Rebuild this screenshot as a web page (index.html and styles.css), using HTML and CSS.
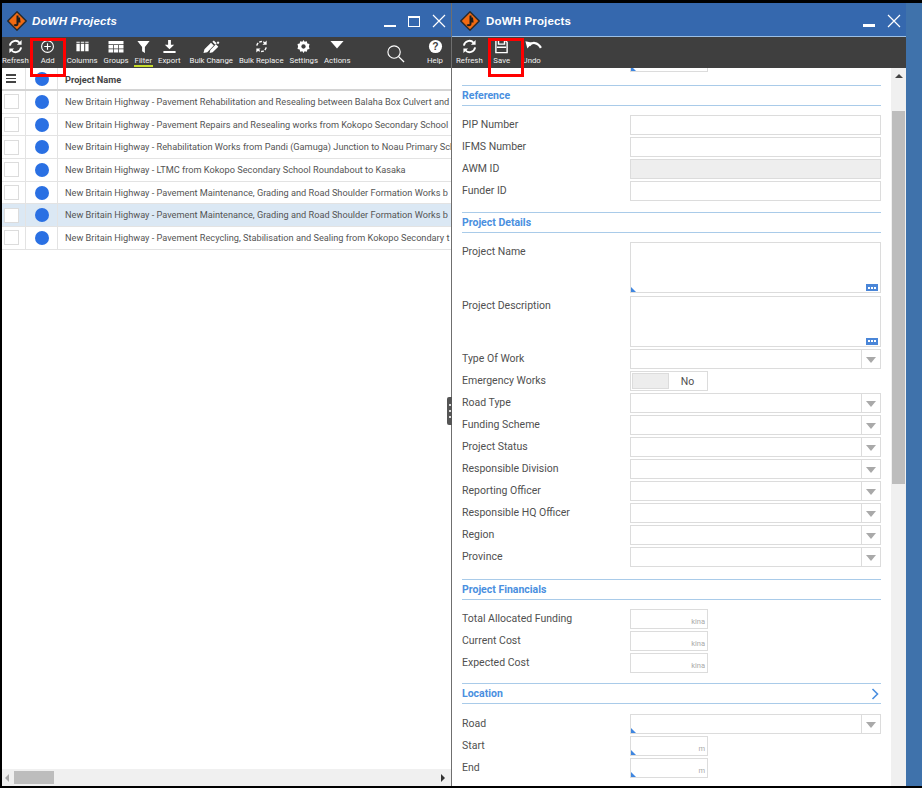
FILE: index.html
```html
<!DOCTYPE html>
<html lang="en">
<head>
<meta charset="utf-8">
<title>DoWH Projects</title>
<link rel="stylesheet" href="styles.css">
</head>
<body>
<svg class="defs" width="0" height="0" aria-hidden="true">
  <symbol id="logo" viewBox="0 0 20 20">
    <path d="M10 .8 19.2 10 10 19.2.8 10z" fill="#f26a12" stroke="#2a2a2a" stroke-width="1.4"/>
    <path d="M10.5 4.5v8.5c0 1.6-2.4 1.8-3 .4M12 6.5l.6 5" fill="none" stroke="#1d1d1d" stroke-width="2"/>
  </symbol>
  <symbol id="refresh" viewBox="0 0 16 16">
    <path d="M2 7a6 6 0 0 1 10.4-3M14 9a6 6 0 0 1-10.4 3" fill="none" stroke="#fff" stroke-width="2"/>
    <path d="M14.5 1v5h-5zM1.500 15v-5h5z" fill="#fff"/>
  </symbol>
  <symbol id="caret" viewBox="0 0 10 6"><path d="M0 0h10L5 6z" fill="#a9a9a9"/></symbol>
  <symbol id="close" viewBox="0 0 14 14"><path d="M1 1l12 12M13 1 1 13" stroke="#fff" stroke-width="1.200" fill="none"/></symbol>
</svg>
<div class="screen">
  <section class="win win-left">
    <header class="title">
      <svg class="logo"><use href="#logo"/></svg>
      <span class="title-text title-italic">DoWH Projects</span>
      <span class="win-btns">
        <i class="min"></i>
        <i class="max"></i>
        <svg class="x"><use href="#close"/></svg>
      </span>
    </header>
    <nav class="toolbar">
      <div class="tool"><svg class="ic"><use href="#refresh"/></svg><span>Refresh</span></div>
      <div class="tool tool-add"><svg class="ic" viewBox="0 0 16 16"><circle cx="8" cy="8" r="6.300" fill="none" stroke="#fff" stroke-width="1.200"/><path d="M8 4.500v7M4.500 8h7" stroke="#fff" stroke-width="1.200"/></svg><span>Add</span></div>
      <div class="tool"><svg class="ic ic-col" viewBox="0 0 16 16"><path d="M1.500 5h3.600v8H1.500zM6.200 5h3.600v8H6.200zM10.900 5h3.600v8h-3.600zM1.500 3h3.600v1H1.500zM6.200 3h3.600v1H6.200zM10.900 3h3.600v1h-3.600z" fill="#fff"/></svg><span>Columns</span></div>
      <div class="tool"><svg class="ic ic-wide" viewBox="0 0 18 16"><path d="M1 2h16v3.500H1zM1 6.500h4.800V10H1zM6.600 6.500h4.800V10H6.600zM12.200 6.500H17V10h-4.800zM1 11h4.800v3.500H1zM6.600 11h4.800v3.500H6.600zM12.200 11H17v3.500h-4.800z" fill="#fff"/></svg><span>Groups</span></div>
      <div class="tool tool-on"><svg class="ic" viewBox="0 0 16 16"><path d="M1.500 2h13L9.500 8.500V15l-3-2V8.500z" fill="#fff"/></svg><span>Filter</span></div>
      <div class="tool"><svg class="ic" viewBox="0 0 16 16"><path d="M6.500 1h3v5H13L8 11 3 6h3.500zM1.500 12.800h13V15h-13z" fill="#fff"/></svg><span>Export</span></div>
      <div class="tool tool-bulk"><svg class="ic ic-wide" viewBox="0 0 20 16"><path d="M2 15l1-4 7-7 3 3-7 7zM8.500 15l.8-3.300 6-6 2.500 2.500-6 6z" fill="#fff"/><path d="M11.500 3l1.500-1.500 3 3L14.500 6zM16 4l1.500-1.500 1.500 1.500L17.500 5.500z" fill="#fff"/></svg><span>Bulk Change</span></div>
      <div class="tool"><svg class="ic" viewBox="0 0 16 16"><path d="M3 7a5.200 5.200 0 0 1 8.500-3M13 9a5.200 5.200 0 0 1-8.500 3" fill="none" stroke="#fff" stroke-width="1.500" stroke-dasharray="3 1.300"/><path d="M13.500 1.500v4.500H9zM2.500 14.500V10H7z" fill="#fff"/></svg><span>Bulk Replace</span></div>
      <div class="tool"><svg class="ic" viewBox="0 0 16 16"><path d="M8 1l1.200 2 2.300-.6.600 2.300 2.300.6L13.800 8l.6 2.700-2.300.6-.6 2.300-2.300-.6L8 15l-1.200-2-2.300.6-.6-2.300-2.300-.6L2.200 8l-.6-2.700 2.300-.6.600-2.300 2.300.6z" fill="#fff"/><circle cx="8" cy="8" r="2.300" fill="#3f3f3f"/></svg><span>Settings</span></div>
      <div class="tool"><svg class="ic ic-wide" viewBox="0 0 18 16"><path d="M2 2h14L9 10z" fill="#fff"/></svg><span>Actions</span></div>
      <div class="tool-search"><svg class="search" viewBox="0 0 20 20"><circle cx="8.500" cy="8.500" r="6.500" fill="none" stroke="#fff" stroke-width="1.200"/><path d="M13.300 13.300 19 19" stroke="#fff" stroke-width="1.400"/></svg></div>
      <div class="tool tool-help"><svg class="ic" viewBox="0 0 16 16"><circle cx="8" cy="8" r="7" fill="#fff"/><text x="8" y="12" class="help-q">?</text></svg><span>Help</span></div>
    </nav>
    <div class="grid">
      <div class="grow grow-head">
        <div class="c-check c-menu"><i></i><i></i><i></i></div>
        <div class="c-dot"><b></b></div>
        <div class="c-name c-name-head">Project Name</div>
      </div>
      <div class="grow"><div class="c-check"><s></s></div><div class="c-dot"><b></b></div><div class="c-name">New Britain Highway - Pavement Rehabilitation and Resealing between Balaha Box Culvert and</div></div>
      <div class="grow"><div class="c-check"><s></s></div><div class="c-dot"><b></b></div><div class="c-name">New Britain Highway - Pavement Repairs and Resealing works from Kokopo Secondary School</div></div>
      <div class="grow"><div class="c-check"><s></s></div><div class="c-dot"><b></b></div><div class="c-name">New Britain Highway - Rehabilitation Works from Pandi (Gamuga) Junction to Noau Primary Sch</div></div>
      <div class="grow"><div class="c-check"><s></s></div><div class="c-dot"><b></b></div><div class="c-name">New Britain Highway - LTMC from Kokopo Secondary School Roundabout to Kasaka</div></div>
      <div class="grow"><div class="c-check"><s></s></div><div class="c-dot"><b></b></div><div class="c-name">New Britain Highway - Pavement Maintenance, Grading and Road Shoulder Formation Works b</div></div>
      <div class="grow grow-sel"><div class="c-check"><s></s></div><div class="c-dot"><b></b></div><div class="c-name">New Britain Highway - Pavement Maintenance, Grading and Road Shoulder Formation Works b</div></div>
      <div class="grow"><div class="c-check"><s></s></div><div class="c-dot"><b></b></div><div class="c-name">New Britain Highway - Pavement Recycling, Stabilisation and Sealing from Kokopo Secondary t</div></div>
    </div>
    <div class="hscroll">
      <i class="arr arr-l"></i>
      <i class="thumb-h"></i>
      <i class="arr arr-r"></i>
    </div>
    <div class="redbox redbox-add"></div>
  </section>

  <section class="win win-right">
    <header class="title title-right">
      <svg class="logo"><use href="#logo"/></svg>
      <span class="title-text">DoWH Projects</span>
      <span class="win-btns">
        <i class="min"></i>
        <svg class="x"><use href="#close"/></svg>
      </span>
    </header>
    <nav class="toolbar">
      <div class="tool"><svg class="ic"><use href="#refresh"/></svg><span>Refresh</span></div>
      <div class="tool tool-save"><svg class="ic" viewBox="0 0 16 16"><path d="M2 1.500h10l2 2v11H2z" fill="none" stroke="#fff" stroke-width="1.500"/><path d="M4.800 2v3.500h6.400V2M3 8.800h10" fill="none" stroke="#fff" stroke-width="1.500"/></svg><span>Save</span></div>
      <div class="tool tool-undo"><svg class="ic ic-wide" viewBox="0 0 20 16"><path d="M7 7C10 3 16 3 19.500 9.500" fill="none" stroke="#fff" stroke-width="2.400"/><path d="M3 2.500l7.500 1.500L5 10z" fill="#fff"/></svg><span>Undo</span></div>
    </nav>
    <div class="body">
      <div class="form">
        <div class="stub req"></div>
        <h3 class="sec sec-first">Reference</h3>
        <div class="row"><label>PIP Number</label><div class="inp"></div></div>
        <div class="row"><label>IFMS Number</label><div class="inp"></div></div>
        <div class="row"><label>AWM ID</label><div class="inp inp-off"></div></div>
        <div class="row"><label>Funder ID</label><div class="inp"></div></div>
        <h3 class="sec">Project Details</h3>
        <div class="row row-tall"><label>Project Name</label><div class="inp inp-area req"><em class="more"></em></div></div>
        <div class="row row-tall"><label>Project Description</label><div class="inp inp-area"><em class="more"></em></div></div>
        <div class="row"><label>Type Of Work</label><div class="inp sel"><u><svg><use href="#caret"/></svg></u></div></div>
        <div class="row"><label>Emergency Works</label><div class="inp short toggle"><span class="knob"></span><span class="no">No</span></div></div>
        <div class="row"><label>Road Type</label><div class="inp sel"><u><svg><use href="#caret"/></svg></u></div></div>
        <div class="row"><label>Funding Scheme</label><div class="inp sel"><u><svg><use href="#caret"/></svg></u></div></div>
        <div class="row"><label>Project Status</label><div class="inp sel"><u><svg><use href="#caret"/></svg></u></div></div>
        <div class="row"><label>Responsible Division</label><div class="inp sel"><u><svg><use href="#caret"/></svg></u></div></div>
        <div class="row"><label>Reporting Officer</label><div class="inp sel"><u><svg><use href="#caret"/></svg></u></div></div>
        <div class="row"><label>Responsible HQ Officer</label><div class="inp sel"><u><svg><use href="#caret"/></svg></u></div></div>
        <div class="row"><label>Region</label><div class="inp sel"><u><svg><use href="#caret"/></svg></u></div></div>
        <div class="row"><label>Province</label><div class="inp sel"><u><svg><use href="#caret"/></svg></u></div></div>
        <h3 class="sec sec-fin">Project Financials</h3>
        <div class="row"><label>Total Allocated Funding</label><div class="inp short unit">kina</div></div>
        <div class="row"><label>Current Cost</label><div class="inp short unit">kina</div></div>
        <div class="row"><label>Expected Cost</label><div class="inp short unit">kina</div></div>
        <h3 class="sec sec-loc">Location<svg class="chev" viewBox="0 0 8 12"><path d="M1.500 1 6.500 6l-5 5" fill="none" stroke="#4a8fe0" stroke-width="1.600"/></svg></h3>
        <div class="row"><label>Road</label><div class="inp sel req"><u><svg><use href="#caret"/></svg></u></div></div>
        <div class="row"><label>Start</label><div class="inp short unit req">m</div></div>
        <div class="row"><label>End</label><div class="inp short unit req">m</div></div>
      </div>
      <div class="vscroll"><i class="up"></i><i class="thumb-v"></i></div>
    </div>
    <div class="redbox redbox-save"></div>
    <div class="splitter"><i></i><i></i><i></i></div>
  </section>
  <aside class="strip"></aside>
</div>
</body>
</html>
```
FILE: styles.css
```css
* { box-sizing: border-box; }
html, body { margin: 0; padding: 0; }
body { background: #000; font-family: Roboto, "Liberation Sans", Arial, sans-serif; color: #4a4a4a; overflow: hidden; }
.defs { position: absolute; }
i, em, u, s, b { display: block; text-decoration: none; font-style: normal; }

.screen { width: 922px; height: 788px; display: flex; padding: 3px 0 2px 2px; background: #000; }
.win { position: relative; display: flex; flex-direction: column; background: #fff; }
.win-left { width: 449px; flex: none; }
.win-right { width: 455px; flex: none; border-left: 1px solid #6f6f6f; }
.strip { flex: 1; background: #3f72ab; }

.title { height: 34px; flex: none; display: flex; align-items: center; background: #3568ae; padding: 2px 5px 0; color: #fff; }
.title-right { padding-left: 8px; border-bottom: 1px solid #9cc0e6; }
.logo { width: 20px; height: 20px; flex: none; }
.title-text { font-size: 11.500px; font-weight: 700; margin-left: 5px; font-family: "Liberation Sans", Arial, sans-serif; letter-spacing: .15px; }
.title-right .title-text { margin-left: 6px; }
.title-italic { font-style: italic; }
.win-btns { margin-left: auto; display: flex; align-items: center; gap: 12px; padding-right: 0; }
.min { width: 12px; height: 2.500px; background: #fff; margin-top: 10px; }
.max { width: 12px; height: 11px; border: 1.500px solid #fff; border-top-width: 2px; }
.x { width: 14px; height: 14px; }

.toolbar { height: 31px; flex: none; display: flex; gap: 6px; background: #3f3f3f; padding: 2px 0 0 0; }
.tool { display: flex; flex-direction: column; align-items: center; color: #f0f0f0; font-size: 7.800px; line-height: 10px; white-space: nowrap; position: relative; }
.ic { width: 15px; height: 15px; margin-bottom: 2px; flex: none; }
.ic-wide { width: 20px; }
.ic-col { width: 17px; }
.tool-add { width: 26px; }
.tool-bulk { margin-left: 3px; }
.tool-on::after { content: ""; position: absolute; left: -1px; right: -1px; bottom: 1px; height: 2px; background: #c6dc2a; }
.tool-search { margin-left: auto; padding: 5px 0 0; }
.search { width: 19px; height: 19px; display: block; }
.tool-help { margin: 0 8px 0 16px; }
.help-q { font: 700 11px "Liberation Sans", Arial, sans-serif; fill: #3f3f3f; text-anchor: middle; }
.win-right .toolbar { gap: 7px; padding-left: 4px; }
.tool-save { width: 24px; }
.tool-undo { margin-left: 1px; }

.grid { flex: 1; min-height: 0; overflow: hidden; }
.grow { height: 22.700px; display: flex; align-items: stretch; border-bottom: 1px solid #e3e3e3; font-size: 9.200px; color: #555; }
.grow-head { border-bottom: 2px solid #d4d4d4; height: 23px; font-weight: 700; }
.grow-sel { background: #dbe8f4; }
.c-check { width: 24px; flex: none; display: flex; align-items: center; justify-content: flex-start; padding-left: 2px; border-right: 1px solid #e3e3e3; }
.c-check s { width: 15px; height: 15px; border: 1px solid #dcdcdc; background: #fff; }
.c-menu { flex-direction: column; justify-content: center; align-items: flex-start; padding-left: 4px; gap: 2px; }
.c-menu i { width: 10px; height: 1.500px; background: #444; }
.c-dot { width: 32px; flex: none; display: flex; align-items: center; justify-content: center; border-right: 1px solid #e3e3e3; }
.c-dot b { width: 14px; height: 14px; border-radius: 50%; background: #2a70e3; }
.c-name { flex: 1; min-width: 0; padding-left: 7px; line-height: 22px; white-space: nowrap; overflow: hidden; }
.c-name-head { color: #444; line-height: 23px; }

.hscroll { height: 17px; flex: none; display: flex; align-items: center; background: #f0f0f0; padding: 0 6px 0 3px; }
.arr { width: 0; height: 0; border-style: solid; border-width: 4px 0; border-color: transparent; }
.arr-l { border-right: 4px solid #a8a8a8; }
.arr-r { border-left: 4px solid #333; margin-left: auto; }
.thumb-h { width: 40px; height: 13px; background: #bdbdbd; margin-left: 5px; }

.body { flex: 1; min-height: 0; display: flex; overflow: hidden; }
.form { flex: 1; min-width: 0; padding: 0 10px 0 10px; overflow: hidden; }
.stub { position: relative; width: 78px; height: 4px; margin-left: 168px; border: 1px solid #dcdcdc; border-top: 0; }
.sec { margin: 9px 0 9px; height: 21px; border-top: 1px solid #a9cbe9; border-bottom: 1px solid #a9cbe9; font-size: 10.500px; font-weight: 700; color: #4a8fe0; line-height: 19px; display: flex; justify-content: space-between; align-items: center; }
.sec-first { margin-top: 13px; }
.sec-fin { margin-top: 10px; }
.sec-loc { margin: 8px 0 10px; }
.chev { width: 8px; height: 12px; margin-right: 2px; }
.row { height: 22px; display: flex; align-items: flex-start; }
.row label { width: 168px; flex: none; font-size: 10.500px; line-height: 18px; padding-top: 1px; color: #505050; }
.row-tall { height: 53.500px; }
.inp { position: relative; width: 251px; height: 20px; border: 1px solid #dcdcdc; background: #fff; flex: none; }
.inp-off { background: #eeeeee; }
.inp-area { height: 51px; }
.short { width: 78px; }
.req::before { content: ""; position: absolute; left: 0; bottom: 0; border-style: solid; border-width: 5px 0 0 5px; border-color: transparent transparent transparent #3f86e0; }
.more { position: absolute; right: 2px; bottom: 1px; width: 12px; height: 7px; background: #4a86d8; display: flex; align-items: center; justify-content: center; }
.more::after { content: ""; width: 8px; height: 2px; background: repeating-linear-gradient(90deg, #fff 0 2px, transparent 2px 3px); }
.sel u { position: absolute; right: 0; top: 0; bottom: 0; width: 19px; border-left: 1px solid #dcdcdc; display: flex; align-items: center; justify-content: center; }
.sel svg { width: 10px; height: 6px; margin-top: 1px; }
.toggle { display: flex; align-items: stretch; padding: 1px; }
.knob { width: 37px; background: #ededed; border: 1px solid #dcdcdc; }
.no { flex: 1; text-align: center; font-size: 10.500px; line-height: 17px; color: #505050; }
.unit { font-size: 7.500px; color: #aaa; text-align: right; padding: 6px 2px 0 0; line-height: 11px; }

.vscroll { position: relative; width: 15px; flex: none; background: #f0f0f0; margin-right: 0; }
.up { position: absolute; left: 4px; top: 6px; border-style: solid; border-width: 0 4px 4px; border-color: transparent transparent #444; }
.thumb-v { position: absolute; left: 1px; right: 1px; top: 43px; height: 373px; background: #bdbdbd; }

.redbox { position: absolute; top: 35px; width: 36px; height: 39px; border: 3px solid #ff0000; }
.redbox-add { left: 28px; }
.redbox-save { left: 36px; }
.splitter { position: absolute; left: -5px; top: 394px; width: 5px; height: 28px; background: #555; border-radius: 2px 0 0 2px; display: flex; flex-direction: column; align-items: center; justify-content: center; gap: 4px; }
.splitter i { width: 2px; height: 2px; background: #ddd; }
```
